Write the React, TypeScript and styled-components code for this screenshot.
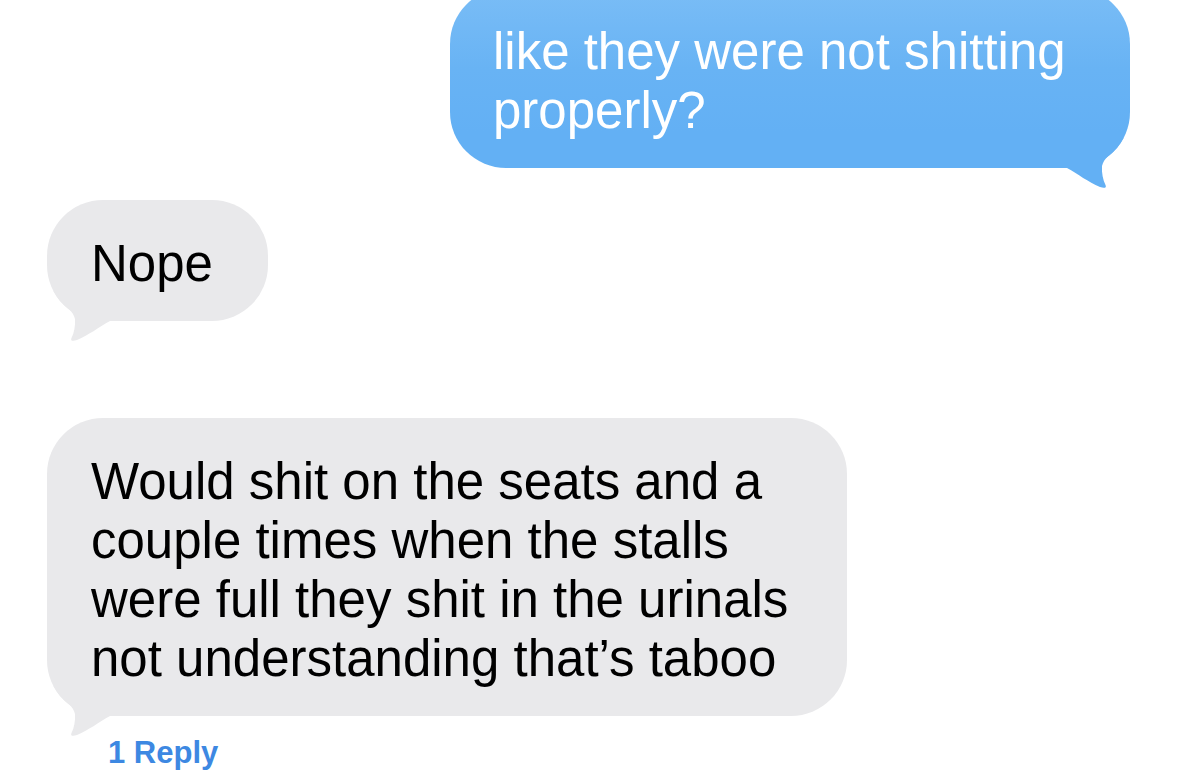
import React from 'react';
import styled, { createGlobalStyle } from 'styled-components';

const GlobalStyle = createGlobalStyle`
  html, body {
    margin: 0;
    padding: 0;
    background: #ffffff;
    overflow: hidden;
  }
`;

const Thread = styled.div`
  width: 1178px;
  height: 784px;
  display: flex;
  flex-direction: column;
  padding: 0 48px 0 47px;
  box-sizing: border-box;
  font-family: 'Liberation Sans', Arial, sans-serif;
`;

const Bubble = styled.div<{ $sent?: boolean; $width: number }>`
  position: relative;
  width: ${({ $width }) => $width}px;
  box-sizing: border-box;
  align-self: ${({ $sent }) => ($sent ? 'flex-end' : 'flex-start')};
  padding: ${({ $sent }) => ($sent ? '34px 50px 28px 43px' : '34px 40px 28px 44px')};
  border-radius: 56px;
  background: ${({ $sent }) =>
    $sent ? 'linear-gradient(180deg, #7abdf6 0%, #68b3f4 45%, #63b0f4 80%, #63b0f4 100%)' : '#e9e9eb'};
  color: ${({ $sent }) => ($sent ? '#ffffff' : '#000000')};
  font-size: 51px;
  line-height: 59px;
  white-space: nowrap;
`;

const BubbleText = styled.span`
  position: relative;
  z-index: 1;
`;

const Tail = styled.svg<{ $sent?: boolean }>`
  position: absolute;
  z-index: 0;
  bottom: -22px;
  width: 64px;
  height: 52px;
  ${({ $sent }) => ($sent ? 'right: 0; transform: scaleX(-1);' : 'left: 0;')}
`;

const SentBubble = styled(Bubble)`
  margin-top: -12px;
`;

const NopeBubble = styled(Bubble)`
  margin-top: 32px;
`;

const LongBubble = styled(Bubble)`
  margin-top: 97px;
`;

const ReplyLink = styled.div`
  margin-top: 19px;
  margin-left: 61px;
  font-size: 31px;
  line-height: 36px;
  font-weight: 700;
  color: #3d88e2;
`;

function BubbleTail({ sent, color }: { sent?: boolean; color: string }) {
  return (
    <Tail $sent={sent} viewBox="0 0 64 52" aria-hidden="true">
      <path
        d="M6.4 0 L64 0 L64 30 L63 30 C52 36 42 44 30 49 C26 50.5 23 50 24.5 47 C27 42 28.5 35 28 28 C27 24 25 21 22.7 19 A56 56 0 0 1 6.4 0 Z"
        fill={color}
      />
    </Tail>
  );
}

export default function App() {
  return (
    <>
      <GlobalStyle />
      <Thread>
        <SentBubble $sent $width={680}>
          <BubbleText>
            like they were not shitting
            <br />
            properly?
          </BubbleText>
          <BubbleTail sent color="#63b0f4" />
        </SentBubble>

        <NopeBubble $width={221}>
          <BubbleText>Nope</BubbleText>
          <BubbleTail color="#e9e9eb" />
        </NopeBubble>

        <LongBubble $width={800}>
          <BubbleText>
            Would shit on the seats and a
            <br />
            couple times when the stalls
            <br />
            were full they shit in the urinals
            <br />
            not understanding that’s taboo
          </BubbleText>
          <BubbleTail color="#e9e9eb" />
        </LongBubble>

        <ReplyLink>1 Reply</ReplyLink>
      </Thread>
    </>
  );
}
